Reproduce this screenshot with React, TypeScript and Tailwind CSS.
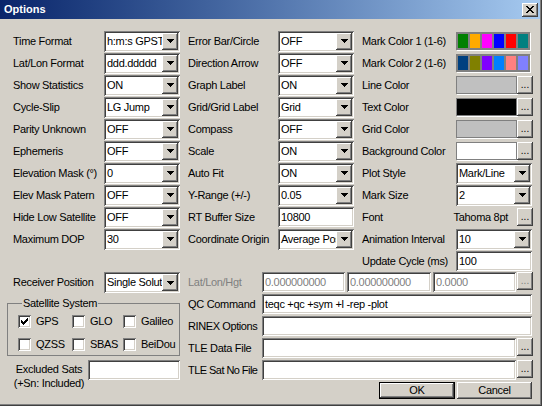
import React from "react";

const SUNKEN =
  "shadow-[inset_1px_1px_0_#808080,inset_-1px_-1px_0_#ffffff,inset_2px_2px_0_#404040,inset_-2px_-2px_0_#d4d0c8]";
const RAISED =
  "shadow-[inset_-1px_-1px_0_#404040,inset_1px_1px_0_#ffffff,inset_-2px_-2px_0_#808080,inset_2px_2px_0_#d4d0c8]";

function Arrow() {
  return (
    <svg width="7" height="4" viewBox="0 0 7 4" shapeRendering="crispEdges">
      <path d="M0 0H7V1H6V2H5V3H4V4H3V3H2V2H1V1H0Z" fill="#000" />
    </svg>
  );
}

function Combo({ value, className = "w-[76px]" }: { value: string; className?: string }) {
  return (
    <div className={`${SUNKEN} ${className} h-[21px] bg-white flex p-[2px] shrink-0`}>
      <div className="flex-1 min-w-0 overflow-hidden whitespace-nowrap pl-[1px] leading-[17px]">
        {value}
      </div>
      <div
        className={`${RAISED} bg-[#d4d0c8] w-[16px] h-[17px] flex items-center justify-center shrink-0`}
      >
        <Arrow />
      </div>
    </div>
  );
}

function TextBox({
  value = "",
  className = "w-[76px]",
  muted = false,
}: {
  value?: string;
  className?: string;
  muted?: boolean;
}) {
  return (
    <div
      className={`${SUNKEN} ${className} h-[20px] bg-white flex items-center px-[3px] overflow-hidden whitespace-nowrap shrink-0 ${
        muted ? "text-[#808080]" : "text-black"
      }`}
    >
      {value}
    </div>
  );
}

function Dots({ muted = false }: { muted?: boolean }) {
  return (
    <div
      className={`${RAISED} bg-[#d4d0c8] w-[16px] h-[18px] flex items-end justify-center pb-[4px] shrink-0 leading-none text-[10px] tracking-normal ${
        muted ? "text-[#808080]" : "text-black"
      }`}
    >
      ...
    </div>
  );
}

function Swatch({ className }: { className: string }) {
  return (
    <div className="flex items-center shrink-0">
      <div className={`w-[61px] h-[18px] border border-[#808080] shadow-[1px_1px_0_#ffffff] ${className}`} />
      <Dots />
    </div>
  );
}

function MarkColors({ cells }: { cells: string[] }) {
  return (
    <div className="w-[74px] h-[18px] bg-[#808080] p-[2px] flex gap-[2px] shadow-[1px_1px_0_#ffffff] shrink-0">
      {cells.map((c, i) => (
        <div key={i} className={`flex-1 h-full ${c}`} />
      ))}
    </div>
  );
}

function Row({
  label,
  lw,
  children,
}: {
  label: string;
  lw: string;
  children: React.ReactNode;
}) {
  return (
    <div className="flex items-center h-[22px]">
      <div className={`${lw} shrink-0 whitespace-nowrap`}>{label}</div>
      {children}
    </div>
  );
}

function Check({ label, checked = false, w = "" }: { label: string; checked?: boolean; w?: string }) {
  return (
    <div className={`flex items-center ${w}`}>
      <div className={`${SUNKEN} bg-white w-[13px] h-[13px] flex items-center justify-center shrink-0`}>
        {checked && (
          <svg width="7" height="7" viewBox="0 0 7 7" shapeRendering="crispEdges">
            <path
              d="M0 2H1V3H2V4H3V3H4V2H5V1H6V0H7V3H6V4H5V5H4V6H3V7H2V6H1V5H0Z"
              fill="#000"
            />
          </svg>
        )}
      </div>
      <span className="ml-[5px] whitespace-nowrap">{label}</span>
    </div>
  );
}

export default function App() {
  const L1 = "w-[91px]";
  const L2 = "w-[90px]";
  const L3 = "w-[94px]";
  return (
    <div className="w-[542px] h-[406px] bg-[#d4d0c8] flex flex-col font-['Liberation_Sans',Arial,sans-serif] text-[11px] leading-[13px] tracking-[-0.3px] text-black shadow-[inset_-1px_-1px_0_#404040,inset_-2px_-2px_0_#808080] overflow-hidden">
      {/* Title bar */}
      <div className="h-[19px] mr-[2px] flex items-center justify-between bg-linear-to-r from-[#0a246a] to-[#a6caf0] pl-[4px] pr-[2px] shrink-0">
        <span className="text-white font-bold text-[11px] tracking-normal">Options</span>
        <div className={`${RAISED} bg-[#d4d0c8] w-[16px] h-[14px] flex items-center justify-center`}>
          <svg width="8" height="7" viewBox="0 0 8 7" shapeRendering="crispEdges">
            <path
              d="M0 0H2V1H3V2H5V1H6V0H8V1H7V2H6V3H5V4H6V5H7V6H8V7H6V6H5V5H3V6H2V7H0V6H1V5H2V4H3V3H2V2H1V1H0Z"
              fill="#000"
            />
          </svg>
        </div>
      </div>

      {/* Body */}
      <div className="flex flex-col pl-[7px] pt-[11px]">
        {/* Top three columns */}
        <div className="flex gap-[8px] pl-[6px]">
          <div className="w-[167px] flex flex-col">
            <Row label="Time Format" lw={L1}><Combo value="h:m:s GPST" /></Row>
            <Row label="Lat/Lon Format" lw={L1}><Combo value="ddd.ddddd" /></Row>
            <Row label="Show Statistics" lw={L1}><Combo value="ON" /></Row>
            <Row label="Cycle-Slip" lw={L1}><Combo value="LG Jump" /></Row>
            <Row label="Parity Unknown" lw={L1}><Combo value="OFF" /></Row>
            <Row label="Ephemeris" lw={L1}><Combo value="OFF" /></Row>
            <Row label="Elevation Mask (°)" lw={L1}><Combo value="0" /></Row>
            <Row label="Elev Mask Patern" lw={L1}><Combo value="OFF" /></Row>
            <Row label="Hide Low Satellite" lw={L1}><Combo value="OFF" /></Row>
            <Row label="Maximum DOP" lw={L1}><Combo value="30" /></Row>
          </div>
          <div className="w-[166px] flex flex-col">
            <Row label="Error Bar/Circle" lw={L2}><Combo value="OFF" /></Row>
            <Row label="Direction Arrow" lw={L2}><Combo value="OFF" /></Row>
            <Row label="Graph Label" lw={L2}><Combo value="ON" /></Row>
            <Row label="Grid/Grid Label" lw={L2}><Combo value="Grid" /></Row>
            <Row label="Compass" lw={L2}><Combo value="OFF" /></Row>
            <Row label="Scale" lw={L2}><Combo value="ON" /></Row>
            <Row label="Auto Fit" lw={L2}><Combo value="ON" /></Row>
            <Row label="Y-Range (+/-)" lw={L2}><Combo value="0.05" /></Row>
            <Row label="RT Buffer Size" lw={L2}><TextBox value="10800" /></Row>
            <Row label="Coordinate Origin" lw={L2}><Combo value="Average Position" /></Row>
          </div>
          <div className="w-[171px] flex flex-col">
            <Row label="Mark Color 1 (1-6)" lw={L3}>
              <MarkColors
                cells={["bg-[#008000]", "bg-[#ffaa00]", "bg-[#ff00ff]", "bg-[#0000ff]", "bg-[#ff0000]", "bg-[#008080]"]}
              />
            </Row>
            <Row label="Mark Color 2 (1-6)" lw={L3}>
              <MarkColors
                cells={["bg-[#004080]", "bg-[#808000]", "bg-[#8000ff]", "bg-[#0080ff]", "bg-[#ff8080]", "bg-[#8080ff]"]}
              />
            </Row>
            <Row label="Line Color" lw={L3}><Swatch className="bg-[#c0c0c0]" /></Row>
            <Row label="Text Color" lw={L3}><Swatch className="bg-black" /></Row>
            <Row label="Grid Color" lw={L3}><Swatch className="bg-[#c0c0c0]" /></Row>
            <Row label="Background Color" lw={L3}><Swatch className="bg-white" /></Row>
            <Row label="Plot Style" lw={L3}><Combo value="Mark/Line" /></Row>
            <Row label="Mark Size" lw={L3}><Combo value="2" /></Row>
            <div className="flex items-center h-[22px]">
              <span>Font</span>
              <span className="ml-auto mr-[9px] whitespace-nowrap">Tahoma 8pt</span>
              <Dots />
            </div>
            <Row label="Animation Interval" lw={L3}><Combo value="10" /></Row>
            <Row label="Update Cycle (ms)" lw={L3}><TextBox value="100" /></Row>
          </div>
        </div>

        {/* Bottom section */}
        <div className="flex gap-[8px]">
          <div className="w-[173px] flex flex-col">
            <div className="flex items-center h-[21px] pl-[6px]">
              <div className={`${L1} shrink-0 whitespace-nowrap`}>Receiver Position</div>
              <Combo value="Single Solution" />
            </div>
            <fieldset className="mt-[4px] border border-[#808080] pt-[1px] pb-[1px] pl-[10px]">
              <legend className="ml-[4px] px-[1px] leading-[13px]">Satellite System</legend>
              <div className="flex flex-col gap-[3px]">
                <div className="flex items-center h-[20px]">
                  <Check label="GPS" checked w="w-[54px]" />
                  <Check label="GLO" w="w-[51px]" />
                  <Check label="Galileo" />
                </div>
                <div className="flex items-center h-[20px]">
                  <Check label="QZSS" w="w-[54px]" />
                  <Check label="SBAS" w="w-[51px]" />
                  <Check label="BeiDou" />
                </div>
              </div>
            </fieldset>
            <div className="mt-[4px] flex items-start">
              <div className="w-[81px] pl-[3px] pt-[2px] text-center leading-[14px] whitespace-nowrap shrink-0">
                Excluded Sats
                <br />
                (+Sn: Included)
              </div>
              <TextBox className="w-[92px]" />
            </div>
          </div>

          <div className="w-[345px] flex flex-col">
            <div className="flex items-start h-[22px]">
              <div className="w-[74px] h-[20px] flex items-center text-[#808080] shrink-0">Lat/Lon/Hgt</div>
              <TextBox value="0.000000000" className="w-[83px]" muted />
              <TextBox value="0.000000000" className="w-[84px] ml-[2px]" muted />
              <TextBox value="0.0000" className="w-[83px] ml-[2px]" muted />
              <div className="ml-[1px]">
                <Dots muted />
              </div>
            </div>
            <div className="flex items-start h-[22px]">
              <div className="w-[74px] h-[20px] flex items-center shrink-0">QC Command</div>
              <TextBox value="teqc +qc +sym +l -rep -plot" className="w-[270px]" />
            </div>
            <div className="flex items-start h-[22px]">
              <div className="w-[74px] h-[20px] flex items-center shrink-0 whitespace-nowrap tracking-[-0.4px]">RINEX Options</div>
              <TextBox className="w-[270px]" />
            </div>
            <div className="flex items-start h-[22px]">
              <div className="w-[74px] h-[20px] flex items-center shrink-0 whitespace-nowrap">TLE Data File</div>
              <TextBox className="w-[254px]" />
              <div className="ml-[1px]">
                <Dots />
              </div>
            </div>
            <div className="flex items-start h-[22px]">
              <div className="w-[74px] h-[20px] flex items-center shrink-0 whitespace-nowrap tracking-[-0.55px]">TLE Sat No File</div>
              <TextBox className="w-[254px]" />
              <div className="ml-[1px]">
                <Dots />
              </div>
            </div>
            <div className="flex justify-end gap-[2px] pr-[1px]">
              <div className="w-[76px] h-[17px] border border-black">
                <div className={`${RAISED} h-full flex items-center justify-center`}>OK</div>
              </div>
              <div className={`${RAISED} w-[75px] h-[17px] flex items-center justify-center`}>Cancel</div>
            </div>
          </div>
        </div>
      </div>
    </div>
  );
}
